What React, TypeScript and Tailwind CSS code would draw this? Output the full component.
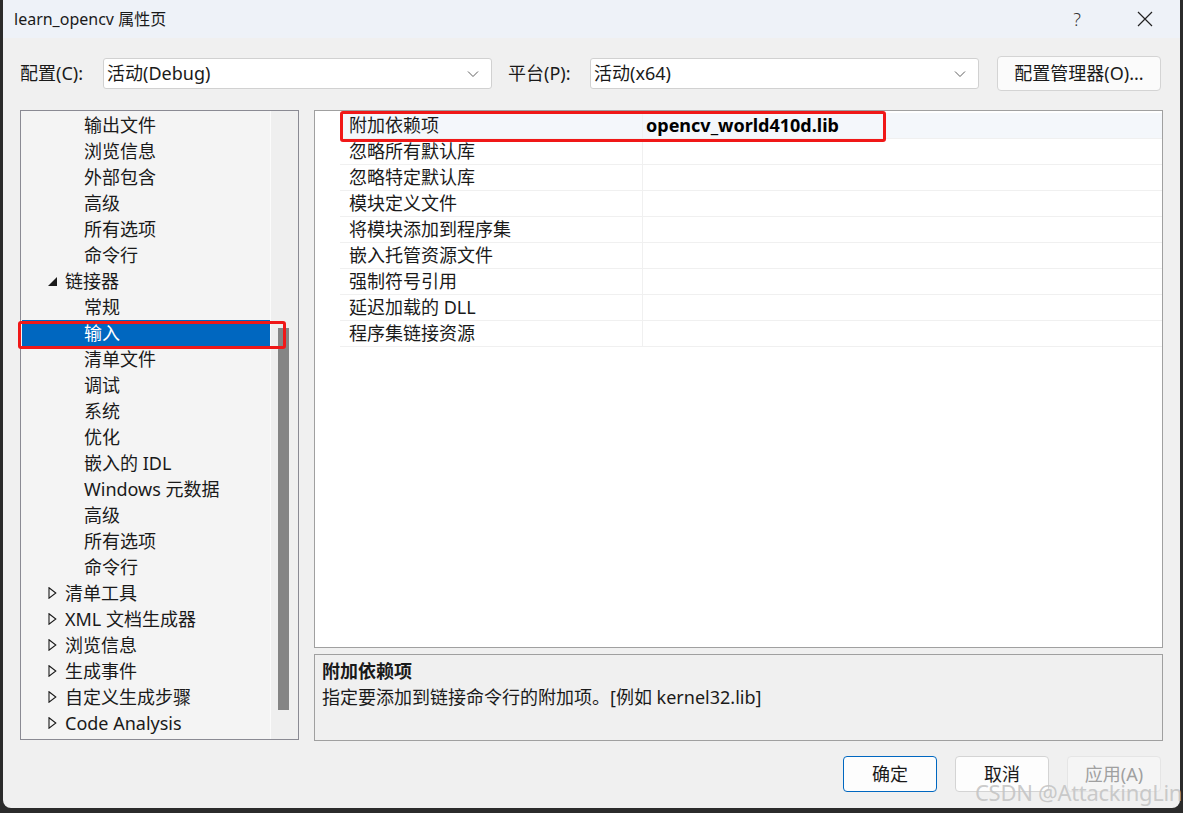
import React from 'react';

const FONT = { fontFamily: '"Noto Sans", "Noto Sans CJK SC", sans-serif' };

type TreeItem = { label: string; level: 1 | 2; kind?: 'open' | 'closed'; selected?: boolean };

const TREE: TreeItem[] = [
  { label: '输出文件', level: 2 },
  { label: '浏览信息', level: 2 },
  { label: '外部包含', level: 2 },
  { label: '高级', level: 2 },
  { label: '所有选项', level: 2 },
  { label: '命令行', level: 2 },
  { label: '链接器', level: 1, kind: 'open' },
  { label: '常规', level: 2 },
  { label: '输入', level: 2, selected: true },
  { label: '清单文件', level: 2 },
  { label: '调试', level: 2 },
  { label: '系统', level: 2 },
  { label: '优化', level: 2 },
  { label: '嵌入的 IDL', level: 2 },
  { label: 'Windows 元数据', level: 2 },
  { label: '高级', level: 2 },
  { label: '所有选项', level: 2 },
  { label: '命令行', level: 2 },
  { label: '清单工具', level: 1, kind: 'closed' },
  { label: 'XML 文档生成器', level: 1, kind: 'closed' },
  { label: '浏览信息', level: 1, kind: 'closed' },
  { label: '生成事件', level: 1, kind: 'closed' },
  { label: '自定义生成步骤', level: 1, kind: 'closed' },
  { label: 'Code Analysis', level: 1, kind: 'closed' },
];

const PROPS = [
  '附加依赖项',
  '忽略所有默认库',
  '忽略特定默认库',
  '模块定义文件',
  '将模块添加到程序集',
  '嵌入托管资源文件',
  '强制符号引用',
  '延迟加载的 DLL',
  '程序集链接资源',
];

const Chevron = () => (
  <svg width="12" height="8" viewBox="0 0 12 8" className="shrink-0">
    <path d="M1 1.5 L6 6.5 L11 1.5" fill="none" stroke="#606060" strokeWidth="1" />
  </svg>
);

const Select: React.FC<{ value: string }> = ({ value }) => (
  <div className="w-[389px] h-[31px] bg-white border border-[#d1d1d1] rounded-[3px] flex items-center justify-between pl-[3px] pr-[12px]">
    <span className="text-[18px] text-[#1a1a1a]">{value}</span>
    <Chevron />
  </div>
);

const TreeRow: React.FC<{ item: TreeItem }> = ({ item }) => (
  <div
    className={`h-[26px] flex items-center ml-[1px] ${item.selected ? 'bg-[#0067c0] text-white' : 'text-[#1a1a1a]'}`}
  >
    {item.level === 2 ? (
      <span className="pl-[62px] text-[18px] leading-[26px]">{item.label}</span>
    ) : (
      <div className="flex items-center pl-[26px]">
        {item.kind === 'open' ? (
          <svg width="9" height="9" viewBox="0 0 9 9" className="shrink-0">
            <path d="M9 0 L9 9 L0 9 Z" fill="#1a1a1a" />
          </svg>
        ) : (
          <svg width="9" height="12" viewBox="0 0 9 12" className="shrink-0">
            <path d="M1 0.8 L7.8 6 L1 11.2 Z" fill="none" stroke="#1a1a1a" strokeWidth="1.1" />
          </svg>
        )}
        <span className="ml-[8px] text-[18px] leading-[26px]">{item.label}</span>
      </div>
    )}
  </div>
);

export default function App() {
  return (
    <div className="relative w-[1183px] h-[813px] bg-[#2b2b2b] overflow-hidden" style={FONT}>
      <div className="ml-[3px] w-[1177px] h-[808px] bg-[#f0f0f0] rounded-b-[8px] flex flex-col">
        {/* title bar */}
        <div className="h-[38px] bg-[#eef2f8] flex items-center justify-between pl-[11px]">
          <span className="text-[16px] text-[#1a1a1a]">learn_opencv 属性页</span>
          <div className="flex items-center">
            <span className="w-[20px] text-center text-[18px] text-[#333] font-light">?</span>
            <span className="w-[50px]" />
            <svg width="16" height="16" viewBox="0 0 16 16" className="mr-[27px]">
              <path d="M1 1 L15 15 M15 1 L1 15" stroke="#222" strokeWidth="1.2" />
            </svg>
          </div>
        </div>

        {/* configuration row */}
        <div className="mt-[18px] h-[35px] flex items-center pl-[17px]">
          <span className="w-[83px] text-[18px] text-[#1a1a1a]">配置(C):</span>
          <Select value="活动(Debug)" />
          <span className="ml-[16px] w-[82px] text-[18px] text-[#1a1a1a]">平台(P):</span>
          <Select value="活动(x64)" />
          <div className="ml-[18px] w-[164px] h-[35px] bg-[#fbfbfb] border border-[#d4d4d4] rounded-[4px] flex items-center justify-center text-[18px] text-[#1a1a1a]">
            配置管理器(O)...
          </div>
        </div>

        {/* main area */}
        <div className="mt-[19px] flex pl-[17px] gap-[15px]">
          {/* tree */}
          <div className="w-[279px] h-[630px] border border-[#8a8a93] bg-[#f4f4f4] flex">
            <div className="w-[250px] pt-[1px] border-r border-[#fbfbfb]">
              {TREE.map((t, i) => (
                <TreeRow key={i} item={t} />
              ))}
            </div>
            <div className="flex-1 bg-[#efefef] pt-[217px] pl-[7px]">
              <div className="w-[11px] h-[382px] bg-[#858585]" />
            </div>
          </div>

          {/* grid + description */}
          <div className="w-[849px] flex flex-col gap-[6px]">
            <div className="h-[538px] border border-[#a0a0a0] bg-white pt-[2px]">
              {PROPS.map((p, i) => (
                <div key={i} className="h-[26px] flex">
                  <div className="w-[25px]" />
                  <div
                    className={`w-[303px] flex items-center pl-[9px] border-b border-r border-[#f0f0f0] text-[18px] text-[#1a1a1a] ${i === 0 ? 'bg-[#f4f7fb]' : ''}`}
                  >
                    {p}
                  </div>
                  <div
                    className={`flex-1 flex items-center pl-[3px] border-b border-[#f0f0f0] ${i === 0 ? 'bg-[#f4f7fb]' : ''}`}
                  >
                    {i === 0 && <span className="text-[18px] font-bold text-black">opencv_world410d.lib</span>}
                  </div>
                </div>
              ))}
            </div>
            <div className="h-[87px] border border-[#a0a0a0] bg-[#f0f0f0] px-[7px] pt-[3px]">
              <div className="text-[18px] font-bold text-[#1a1a1a] leading-[26px]">附加依赖项</div>
              <div className="text-[18px] text-[#1a1a1a] leading-[26px]">指定要添加到链接命令行的附加项。[例如 kernel32.lib]</div>
            </div>
          </div>
        </div>

        {/* buttons */}
        <div className="mt-[15px] flex justify-end pr-[19px] gap-[18px]">
          <div className="w-[94px] h-[36px] bg-[#fdfdfd] border border-[#0067c0] rounded-[4px] flex items-center justify-center text-[18px] text-[#1a1a1a]">
            确定
          </div>
          <div className="w-[94px] h-[36px] bg-[#fdfdfd] border border-[#d4d4d4] rounded-[4px] flex items-center justify-center text-[18px] text-[#1a1a1a]">
            取消
          </div>
          <div className="w-[94px] h-[36px] bg-[#f5f5f5] border border-[#e5e5e5] rounded-[4px] flex items-center justify-center text-[18px] text-[#a0a0a0]">
            应用(A)
          </div>
        </div>
      </div>

      {/* red highlight boxes */}
      <div className="absolute left-[18px] top-[321px] w-[268px] h-[28px] border-[3px] border-[#f01818] rounded-[3px]" />
      <div className="absolute left-[340px] top-[111px] w-[546px] h-[31px] border-[3px] border-[#f01818] rounded-[3px]" />

      {/* watermark */}
      <div className="absolute left-[975px] top-[777px] whitespace-nowrap text-[22px] leading-[30px] text-[#c4c4c4]/90 tracking-[-0.3px]">
        CSDN @AttackingLin
      </div>
    </div>
  );
}
